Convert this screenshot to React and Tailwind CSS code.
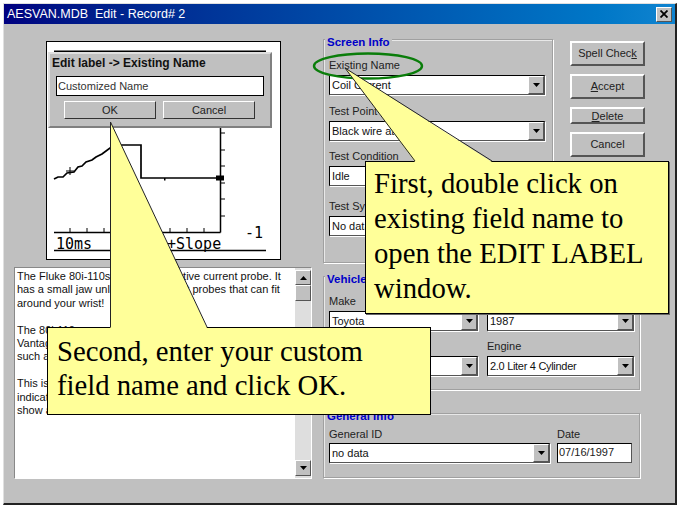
const sans = "font-['Liberation_Sans',sans-serif]";

function DownArrow({ className = "" }) {
  return (
    <svg width="7" height="4" viewBox="0 0 7 4" className={`block ${className}`}>
      <path d="M0 0h7L3.5 4z" fill="#000" />
    </svg>
  );
}

function ArrowButton({ children, className = "" }) {
  return (
    <div
      className={`flex items-center justify-center bg-[#c0c0c0] border border-t-white border-l-white border-b-[#555] border-r-[#555] ${className}`}
    >
      {children}
    </div>
  );
}

function Combo({ value, className = "", valueClass = "" }) {
  return (
    <div
      className={`flex h-[20px] items-stretch bg-white border border-black border-r-[#555] border-b-[#555] shadow-[1px_1px_0_#fff] ${className}`}
    >
      <span className={`flex-1 pl-[2px] text-[11px] leading-[18px] text-[#111] whitespace-nowrap overflow-hidden ${valueClass}`}>
        {value}
      </span>
      <ArrowButton className="w-[16px]">
        <DownArrow />
      </ArrowButton>
    </div>
  );
}

function Label({ children, className = "" }) {
  return (
    <div className={`text-[11px] leading-[13px] text-[#222] whitespace-nowrap ${className}`}>
      {children}
    </div>
  );
}

function Legend({ children }) {
  return (
    <div className="-ml-[4px] -mt-[4px] w-fit bg-[#c0c0c0] px-[2px] text-[11.5px] font-bold leading-[12px] text-[#0000c8]">
      {children}
    </div>
  );
}

function Group({ className = "", children }) {
  return (
    <div className={`border border-[#a0a0a0] shadow-[1px_1px_0_#fff,inset_1px_1px_0_#e8e8e8] ${className}`}>
      {children}
    </div>
  );
}

function WinButton({ className = "", children }) {
  return (
    <button className={`block w-[75px] bg-[#c0c0c0] border-2 border-t-white border-l-white border-b-[#555] border-r-[#555] text-[11px] text-[#222] ${className}`}>
      {children}
    </button>
  );
}

function Chart() {
  const xTicks = [70, 87, 104, 120, 137, 153, 170, 187, 204];
  const yTicks = [132, 149, 165, 182, 198, 215];
  return (
    <svg viewBox="47 41 233 217" className="block h-full w-full">
      <path d="M54 50.5H266" stroke="#000" strokeWidth="2" />
      <path d="M220.5 120V231.5M54 231.5H220.5M54 249.5H266" stroke="#000" strokeWidth="1.5" fill="none" />
      {xTicks.map((x) => (
        <path key={x} d={`M${x} 227V232`} stroke="#000" />
      ))}
      {yTicks.map((y) => (
        <path key={y} d={`M220 ${y}H225`} stroke="#000" />
      ))}
      <path
        d="M54 178L58 176L63 176L67 172L74 171L78 166L82 165L86 161L92 159L96 156L102 153L110 147L121 144H141V177H220"
        stroke="#000"
        strokeWidth="1.7"
        fill="none"
      />
      <path d="M70 166V174M66 170H74" stroke="#000" />
      <rect x="164" y="177" width="1.5" height="2.5" fill="#000" />
      <rect x="216" y="174.5" width="8" height="5" fill="#000" />
      <text x="56" y="248" fontFamily="DejaVu Sans Mono" fontSize="15" fill="#000">
        10ms
      </text>
      <text x="167" y="248" fontFamily="DejaVu Sans Mono" fontSize="15" fill="#000">
        +Slope
      </text>
      <text x="245" y="237" fontFamily="DejaVu Sans Mono" fontSize="15" fill="#000">
        -1
      </text>
    </svg>
  );
}

function EditLabel() {
  return (
    <div className={`absolute left-[48px] top-[52px] h-[76px] w-[224px] bg-[#c0c0c0] border-2 border-t-[#e0e0e0] border-l-[#e0e0e0] border-b-[#808080] border-r-[#808080] ${sans}`}>
      <div className="pl-[2px] pt-[3px] text-[12px] font-bold leading-[13px] text-[#111]">
        Edit label -&gt; Existing Name
      </div>
      <div className="mx-[6px] mt-[6px] h-[20px] bg-white border border-black px-[1px] text-[11px] leading-[18px] text-[#333]">
        Customized Name
      </div>
      <div className="ml-[14px] mt-[5px] flex gap-[7px]">
        {["OK", "Cancel"].map((t) => (
          <button
            key={t}
            className="h-[18px] w-[92px] bg-[#c0c0c0] border border-t-white border-l-white border-b-[#333] border-r-[#333] text-[11px] leading-[14px] text-[#222]"
          >
            {t}
          </button>
        ))}
      </div>
    </div>
  );
}

function Callouts() {
  const serif = "font-['Liberation_Serif',serif] text-[28.7px] text-black";
  return (
    <>
      <div className={`absolute left-[365px] top-[161px] h-[153px] w-[304px] bg-[#ffff99] border border-black pl-[8px] pt-[4px] leading-[35px] shadow-[1px_1px_0_#666] ${serif}`}>
        First, double click on
        <br />
        existing field name to
        <br />
        open the EDIT LABEL
        <br />
        window.
      </div>
      <div className={`absolute left-[47px] top-[327px] h-[88px] w-[384px] bg-[#ffff99] border border-black pl-[9px] pt-[6px] leading-[34px] ${serif}`}>
        Second, enter your custom
        <br />
        field name and click OK.
      </div>
      <svg width="680" height="510" className="absolute left-0 top-0 pointer-events-none">
        <ellipse cx="368" cy="66" rx="54" ry="12.5" fill="none" stroke="#0a7d0a" strokeWidth="2.4" />
        <polygon points="345,68 415,162 492,162" fill="#ffff99" />
        <path d="M415 161L345 68L492 161" fill="none" stroke="#222" />
        <polygon points="110.5,122 110.5,328 207,328" fill="#ffff99" />
        <path d="M110.5 327V122L207 327" fill="none" stroke="#222" />
      </svg>
    </>
  );
}

export default function App() {
  return (
    <div className={`relative h-[510px] w-[680px] overflow-hidden bg-white pl-[3px] pt-[3px] ${sans}`}>
      <div className="h-[502px] w-[674px] bg-[#c0c0c0] border border-t-[#e0e0e0] border-l-[#e0e0e0] border-b-[#222] border-r-[#222] border-b-2 border-r-2">
        <div className="flex h-[20px] items-center justify-between bg-gradient-to-r from-[#000080] to-[#1084d0] pl-[3px] pr-[3px]">
          <span className="text-[12.5px] leading-[20px] font-medium text-white whitespace-pre">
            AESVAN.MDB  Edit - Record# 2
          </span>
          <ArrowButton className="h-[15px] w-[16px]">
            <svg width="8" height="8" viewBox="0 0 8 8">
              <path d="M0.5 0.5L7.5 7.5M7.5 0.5L0.5 7.5" stroke="#000" strokeWidth="1.8" />
            </svg>
          </ArrowButton>
        </div>

        <div className="flex pl-[10px] pt-[15px]">
          <div className="w-[298px]">
            <div className="ml-[32px] mt-[2px] h-[219px] w-[235px] bg-white border border-black">
              <Chart />
            </div>
            <div className="mt-[7px] flex h-[212px] bg-white border border-[#888] border-r-white border-b-white">
              <div className="flex-1 pl-[2px] pt-[2px] text-[11px] leading-[13.4px] text-[#111] whitespace-pre">
                {"The Fluke 80i-110s is a new inductive current probe. It\nhas a small jaw unlike other current probes that can fit\naround your wrist!\n\nThe 80i-110s\nVantage\nsuch as\n\nThis is\nindicates\nshow a"}
              </div>
              <div className="flex w-[16px] flex-col bg-[#dedede] py-[2px]">
                <ArrowButton className="h-[15px]">
                  <DownArrow className="rotate-180" />
                </ArrowButton>
                <div className="h-[16px] bg-[#c0c0c0] border border-t-white border-l-white border-b-[#555] border-r-[#555]" />
                <div className="flex-1" />
                <ArrowButton className="h-[16px]">
                  <DownArrow />
                </ArrowButton>
              </div>
            </div>
          </div>

          <div className="ml-[11px] w-[322px]">
            <div className="flex">
              <Group className="h-[224px] w-[231px] pl-[5px]">
                <Legend>Screen Info</Legend>
                <Label className="mt-[11px]">Existing Name</Label>
                <Combo className="mt-[3px] w-[216px]" value="Coil Current" />
                <Label className="mt-[10px]">Test Point</Label>
                <Combo className="mt-[3px] w-[216px]" value="Black wire at coil" />
                <Label className="mt-[9px]">Test Condition</Label>
                <Combo className="mt-[3px] w-[216px]" value="Idle" />
                <Label className="mt-[14px]">Test Symptom</Label>
                <Combo className="mt-[3px] w-[216px]" value="No data" />
              </Group>
              <div className="ml-[17px] mt-[2px] flex flex-col gap-[8px]">
                <WinButton className="h-[25px]">
                  Spell Chec<u>k</u>
                </WinButton>
                <WinButton className="h-[25px]">
                  <u>A</u>ccept
                </WinButton>
                <WinButton className="h-[17px] leading-[12px]">
                  <u>D</u>elete
                </WinButton>
                <WinButton className="h-[25px]">Cancel</WinButton>
              </div>
            </div>

            <Group className="mt-[13px] h-[114px] w-[317px] pl-[5px]">
              <Legend>Vehicle Info</Legend>
              <div className="mt-[10px] grid grid-cols-[149px_147px] gap-x-[9px]">
                <div>
                  <Label>Make</Label>
                  <Combo className="mt-[3px]" value="Toyota" />
                </div>
                <div>
                  <Label>Year</Label>
                  <Combo className="mt-[3px]" value="1987" />
                </div>
                <div className="mt-[9px]">
                  <Label>Model</Label>
                  <Combo className="mt-[3px]" value="Camry" />
                </div>
                <div className="mt-[9px]">
                  <Label>Engine</Label>
                  <Combo className="mt-[3px]" value="2.0 Liter 4 Cylinder" valueClass="tracking-[-0.3px]" />
                </div>
              </div>
            </Group>

            <Group className="mt-[23px] h-[65px] w-[317px] pl-[5px]">
              <Legend>General Info</Legend>
              <div className="mt-[6px] flex gap-[7px]">
                <div>
                  <Label>General ID</Label>
                  <Combo className="mt-[2px] w-[221px]" value="no data" />
                </div>
                <div>
                  <Label>Date</Label>
                  <div className="mt-[2px] h-[20px] w-[75px] bg-white border border-black border-r-[#555] border-b-[#555] pl-[1px] text-[11px] leading-[16px] text-[#222]">
                    07/16/1997
                  </div>
                </div>
              </div>
            </Group>
          </div>
        </div>
      </div>

      <EditLabel />
      <Callouts />
    </div>
  );
}
